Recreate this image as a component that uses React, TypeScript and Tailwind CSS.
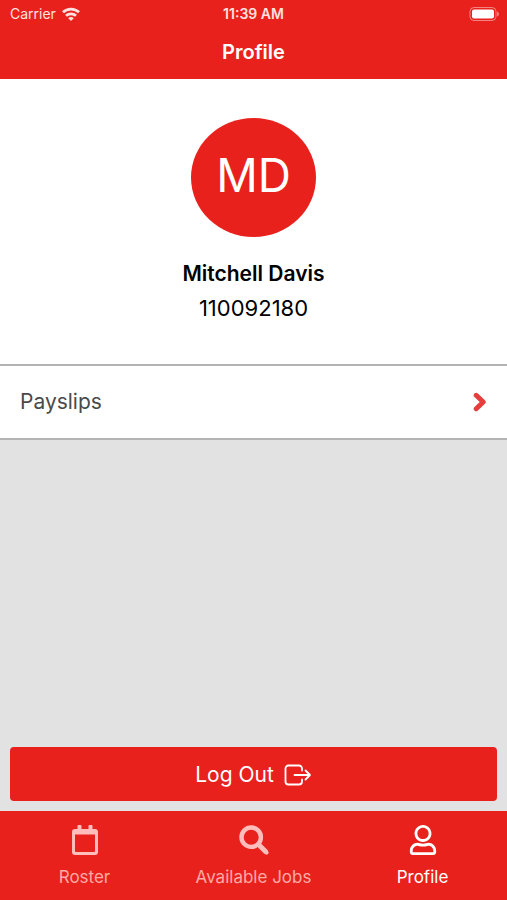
import React from "react";
import { FaRegUser } from "react-icons/fa";

function WifiIcon() {
  return (
    <svg viewBox="0 0 18 14" className="h-3.5 w-[18px]" fill="none" stroke="currentColor" strokeWidth="2.8" aria-hidden="true">
      <path d="M1 5.2C5.400 1 12.600 1 17 5.200" />
      <path d="M4 8.800C6.800 6.200 11.200 6.200 14 8.800" />
      <path d="M6.200 11.300C7.800 9.700 10.200 9.700 11.800 11.300L9 14Z" fill="currentColor" stroke="none" />
    </svg>
  );
}

function BatteryIcon() {
  return (
    <svg viewBox="0 0 30 14" className="h-3.5 w-[30px]" aria-hidden="true">
      <rect x="1" y="0.5" width="26" height="13" rx="4" fill="none" stroke="#fff" strokeOpacity="0.45" />
      <rect x="3" y="2.5" width="22" height="9" rx="2" fill="#fff" />
      <path d="M28.2 4.5c2.2 1 2.2 4 0 5z" fill="#fff" fillOpacity="0.5" />
    </svg>
  );
}

function ChevronIcon() {
  return (
    <svg viewBox="0 0 14 20" className="h-5 w-3.5" fill="none" stroke="#e53e3c" strokeWidth="5" strokeLinecap="round" strokeLinejoin="round" aria-hidden="true">
      <path d="M3.200 3.300 10.200 10 3.200 16.700" />
    </svg>
  );
}

function LogOutIcon() {
  return (
    <svg viewBox="0 0 28 22" className="h-[22px] w-7" fill="none" stroke="currentColor" strokeWidth="1.8" strokeLinecap="round" strokeLinejoin="round" aria-hidden="true">
      <path d="M18 6.500V4.500A3 3 0 0 0 15 1.500H4.500A3 3 0 0 0 1.500 4.500V17.500A3 3 0 0 0 4.500 20.500H15A3 3 0 0 0 18 17.500V15.500" />
      <path d="M10.500 11H26M21.500 6.500 26 11 21.500 15.500" />
    </svg>
  );
}

function CalendarIcon() {
  return (
    <svg viewBox="0 0 26 30" className="h-[30px] w-[26px]" fill="currentColor" aria-hidden="true">
      <path
        fillRule="evenodd"
        d="M5.500 1a1 1 0 0 1 1-1h2a1 1 0 0 1 1 1v3h7V1a1 1 0 0 1 1-1h2a1 1 0 0 1 1 1v3H23a3 3 0 0 1 3 3v20a3 3 0 0 1-3 3H3a3 3 0 0 1-3-3V7a3 3 0 0 1 3-3h2.500zM3 9.500V26.300a.7.7 0 0 0 .7.7h18.600a.7.7 0 0 0 .7-.7V9.500z"
      />
    </svg>
  );
}

function SearchIcon() {
  return (
    <svg viewBox="0 0 30 30" className="size-[30px]" fill="none" stroke="currentColor" aria-hidden="true">
      <circle cx="12.200" cy="12.200" r="9.700" strokeWidth="4.400" />
      <path d="M19 19 27.300 27.300" strokeWidth="5" />
      <path d="M26.500 26.500 27.600 27.600" strokeWidth="4" strokeLinecap="round" />
    </svg>
  );
}

interface TabProps {
  label: string;
  icon: React.ReactNode;
  active?: boolean;
}

function Tab({ label, icon, active = false }: TabProps) {
  return (
    <a
      href="#"
      aria-current={active ? "page" : undefined}
      className={`flex flex-1 flex-col items-center gap-2.5 pt-3.5 pb-[11px] ${active ? "text-white" : "text-[#ffaaa6]"}`}
    >
      <span className={`flex h-[30px] items-center ${active ? "" : "text-[#ffbdbb]"}`}>{icon}</span>
      <span className="text-[17px] leading-6">{label}</span>
    </a>
  );
}

export default function App() {
  return (
    <div className="flex min-h-screen flex-col bg-[#e2e2e2] font-['Inter','Liberation_Sans',sans-serif]">
      <header className="bg-[#e8211d] text-white">
        <div className="grid h-7 grid-cols-3 items-center px-2 text-sm leading-5">
          <div className="flex items-center gap-1.5 pl-0.5 text-[#ffe1df]">
            <span>Carrier</span>
            <WifiIcon />
          </div>
          <span className="text-center font-semibold text-[#ffe1df]">11:39 AM</span>
          <div className="flex justify-end">
            <BatteryIcon />
          </div>
        </div>
        <h1 className="pt-3 pb-[15px] text-center text-xl leading-6 font-semibold">Profile</h1>
      </header>

      <main className="flex flex-1 flex-col">
        <section className="flex flex-col items-center bg-white pt-[39px] pb-[39px] text-[22px] leading-[34px] text-black">
          <div className="mb-5 flex h-[119px] w-[125px] items-center justify-center rounded-[50%] bg-[#e8211d] pb-1.5 text-[46px] text-white">
            MD
          </div>
          <h2 className="text-[21px] font-semibold">Mitchell Davis</h2>
          <p>110092180</p>
        </section>

        <button type="button" className="flex h-19 items-center justify-between border-y-2 border-[#b4b4b4] bg-white px-5 text-[21px] text-[#4a4a4a]">
          Payslips
          <ChevronIcon />
        </button>

        <div className="mt-auto px-2.5 pb-2.5">
          <button type="button" className="flex h-[54px] w-full items-center justify-center gap-2.5 rounded bg-[#e8211d] pt-0.5 text-[21px] text-white">
            Log Out
            <LogOutIcon />
          </button>
        </div>
      </main>

      <nav className="flex bg-[#e8211d]">
        <Tab label="Roster" icon={<CalendarIcon />} />
        <Tab label="Available Jobs" icon={<SearchIcon />} />
        <Tab label="Profile" icon={<FaRegUser className="size-[30px]" strokeWidth={0} />} active />
      </nav>
    </div>
  );
}
